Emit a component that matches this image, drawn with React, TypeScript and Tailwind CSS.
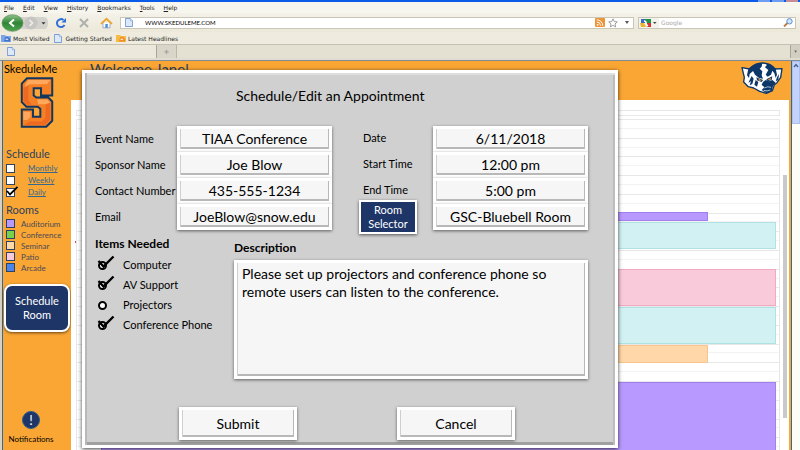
import React from "react";

const sans = "font-['Lato','Liberation_Sans',sans-serif]";
const bevel =
  "border-[3px] border-white bg-[#f6f6f6] shadow-[0_1px_3px_rgba(0,0,0,0.55),inset_1px_0_0_#cfcfcf,inset_-1px_-2px_0_#b8b8b8]";

const menus = ["File", "Edit", "View", "History", "Bookmarks", "Tools", "Help"];

const views = [
  { name: "Monthly", on: false },
  { name: "Weekly", on: false },
  { name: "Daily", on: true },
];

const rooms = [
  { name: "Auditorium", color: "bg-[#b799ff]" },
  { name: "Conference", color: "bg-[#76d14b]" },
  { name: "Seminar", color: "bg-[#ffd8a8]" },
  { name: "Patio", color: "bg-[#f9c9dc]" },
  { name: "Arcade", color: "bg-[#4a86e8]" },
];

const events = [
  { place: "top-[92px] h-[9px] right-[71px]", color: "bg-[#b799ff] border-[#a080ee]" },
  { place: "top-[102px] h-[27px] right-[3px]", color: "bg-[#d2f1f3] border-[#b0e2e4]" },
  { place: "top-[149px] h-[37px] right-[3px]", color: "bg-[#f9cad9] border-[#f2a9c2]" },
  { place: "top-[187px] h-[37px] right-[3px]", color: "bg-[#d2f1f3] border-[#b0e2e4]" },
  { place: "top-[225px] h-[18px] right-[71px]", color: "bg-[#ffd7a8] border-[#f8c68c]" },
  { place: "top-[262px] h-[90px] right-[3px]", color: "bg-[#b799ff] border-[#a080ee]" },
];

const leftFields = [
  { id: "event", label: "Event Name", value: "TIAA Conference" },
  { id: "sponsor", label: "Sponsor Name", value: "Joe Blow" },
  { id: "phone", label: "Contact Number", value: "435-555-1234" },
  { id: "email", label: "Email", value: "JoeBlow@snow.edu" },
];

const rightFields = [
  { id: "date", label: "Date", value: "6/11/2018" },
  { id: "start", label: "Start Time", value: "12:00 pm" },
  { id: "end", label: "End Time", value: "5:00 pm" },
];

const items = [
  { name: "Computer", on: true },
  { name: "AV Support", on: true },
  { name: "Projectors", on: false },
  { name: "Conference Phone", on: true },
];

function PageIcon() {
  return (
    <svg viewBox="0 0 9 10" className="h-[9px] w-2 shrink-0" aria-hidden="true">
      <path d="M.5.5h5.5l2.500 2.500v6.500h-8z" fill="#dce9fb" stroke="#6d94cf" />
      <path d="M6 .5v2.500h2.500" fill="#fff" stroke="#6d94cf" strokeWidth=".7" />
    </svg>
  );
}

function FeedIcon() {
  return (
    <svg viewBox="0 0 10 9" className="h-[9px] w-[10px] shrink-0" aria-hidden="true">
      <rect width="10" height="9" rx="1" fill="#ee9336" />
      <circle cx="2.600" cy="6.800" r=".9" fill="#fff" />
      <path d="M1.800 4a3.700 3.700 0 0 1 3.700 3.700M1.800 1.800a6 6 0 0 1 6 6" fill="none" stroke="#fff" />
    </svg>
  );
}

function FolderFeed({ blue = false }: { blue?: boolean }) {
  return (
    <svg viewBox="0 0 10 8" className="h-2 w-[10px] shrink-0" aria-hidden="true">
      <path d="M0 1h4l1 1h5v6H0z" fill={blue ? "#7da5e6" : "#f3bd45"} />
      <path d="M3 7.500l1-4 2-1 3 2v3z" fill={blue ? "#3f74cf" : "#ee8c2c"} />
      <path d="M4 6l2-2 1.500 2z" fill="#fff" opacity=".7" />
    </svg>
  );
}

function Browser() {
  return (
    <header className="shrink-0 bg-[#eeebde] font-['DejaVu_Sans',sans-serif] text-[6px] text-[#222]">
      <div className="flex h-0.5 justify-end gap-0.5 bg-[#0a5be8] pr-0.5">
        <i className="w-3 bg-[#6d9df2]" />
        <i className="w-3 bg-[#6d9df2]" />
        <i className="w-3 bg-[#c98b96]" />
      </div>
      <nav className="flex h-[11px] items-center bg-[#f6f5ee] pl-1">
        {menus.map((m) => (
          <button key={m} className="mr-[9px] leading-[10px]">
            <span className="underline">{m[0]}</span>
            {m.slice(1)}
          </button>
        ))}
      </nav>
      <div className="flex h-[19px] items-center bg-linear-to-b from-[#f4f2e9] to-[#ece9da] pr-1">
        <svg viewBox="0 0 50 18" className="h-[18px] w-[50px] shrink-0" role="img" aria-label="Back and forward">
          <defs>
            <linearGradient id="back" x1="0" y1="0" x2="0" y2="1">
              <stop offset="0" stopColor="#8fc48a" />
              <stop offset=".5" stopColor="#2f8534" />
              <stop offset="1" stopColor="#4ea550" />
            </linearGradient>
          </defs>
          <path d="M18 3h26q4 0 4 6t-4 6H18z" fill="#d3d2cc" />
          <circle cx="31" cy="9" r="6.500" fill="#c6c5c1" />
          <ellipse cx="12.500" cy="9" rx="10.500" ry="8.300" fill="url(#back)" stroke="#5d8b5c" strokeWidth=".7" />
          <path d="M14 5.500L10 9l4 3.500" fill="none" stroke="#fff" strokeWidth="2" />
          <path d="M29.500 6l3 3-3 3" fill="none" stroke="#eeeeec" strokeWidth="1.600" />
          <path d="M41.500 8.200h4l-2 2.300z" fill="#333" />
        </svg>
        <svg viewBox="0 0 60 12" className="ml-1 h-3 w-[60px] shrink-0" role="img" aria-label="Reload, stop and home">
          <path d="M10.500 8A4 4 0 1 1 9.500 3" fill="none" stroke="#2f6fd6" strokeWidth="2" />
          <path d="M12 1v4.500H7.500z" fill="#2f6fd6" />
          <path d="M26 2l8 8M34 2l-8 8" stroke="#b0b0ac" strokeWidth="2" />
          <path d="M49 6v4.800h7V6" fill="#fff" stroke="#8a99b8" strokeWidth=".8" />
          <path d="M47 6.800l5.500-5 5.500 5" fill="none" stroke="#e9a52c" strokeWidth="1.800" />
          <path d="M51.300 7h2.500v3.800h-2.500z" fill="#4a8fdc" />
        </svg>
        <label className="ml-1.5 flex h-3 flex-1 items-center gap-3 border border-[#c9c6b8] bg-white pl-1 pr-1">
          <PageIcon />
          <input
            aria-label="Address"
            defaultValue="WWW.SKEDULEME.COM"
            className="h-full min-w-0 flex-1 bg-transparent font-['Lato',sans-serif] text-[6px] text-black outline-none"
          />
          <span className="flex items-center gap-[3px]">
            <FeedIcon />
            <svg viewBox="0 0 10 10" className="h-[10px] w-[10px]" aria-hidden="true">
              <path d="M5 .8l1.300 2.800 3 .3-2.300 2 .7 3L5 7.400 2.300 8.900l.7-3-2.300-2 3-.3z" fill="#fff" stroke="#777" strokeWidth=".7" />
            </svg>
            <svg viewBox="0 0 4 3" className="ml-1 h-[3px] w-1" aria-hidden="true">
              <path d="M0 0h4L2 3z" fill="#555" />
            </svg>
          </span>
        </label>
        <label className="ml-1 flex h-3 w-[158px] items-center border border-[#c9c6b8] bg-white pr-0.5">
          <svg viewBox="0 0 20 10" className="h-[10px] w-5 shrink-0 bg-[#f3f2ec]" aria-hidden="true">
            <path d="M2 1h4v4H2z" fill="#3b69c6" />
            <path d="M6 1h6v4H6z" fill="#1f9348" />
            <path d="M7 5h5v4H8z" fill="#d5332a" />
            <path d="M1 5h4l2 4H2z" fill="#e7b530" />
            <path d="M5 3q2 0 2 2t2 3" fill="none" stroke="#fff" strokeWidth="1.600" />
            <path d="M14 4h3.500l-1.700 2z" fill="#444" />
          </svg>
          <input aria-label="Search" placeholder="Google" className="ml-0.5 min-w-0 flex-1 bg-transparent outline-none placeholder:text-[#aaa]" />
          <svg viewBox="0 0 10 9" className="h-[9px] w-[10px] shrink-0" aria-hidden="true">
            <path d="M1 8.500l3.500-3.500" stroke="#b9793f" strokeWidth="1.800" />
            <circle cx="6.500" cy="3.300" r="2.700" fill="#cfe5fb" stroke="#5f8fcb" />
          </svg>
        </label>
      </div>
      <nav className="flex h-3 items-center bg-[#efecdf] pl-px">
        <a href="#visited" className="flex items-center gap-0.5"><FolderFeed blue />Most Visited</a>
        <a href="#start" className="ml-1 flex items-center gap-1"><PageIcon />Getting Started</a>
        <a href="#news" className="ml-1 flex items-center gap-0.5"><FolderFeed />Latest Headlines</a>
      </nav>
      <div className="flex h-[14px] border-t border-[#c5c1b2] bg-[#e4e1d3]">
        <div className="flex w-[157px] items-center border-r border-[#a9a69a] bg-[#ece9dc] pl-[7px]"><PageIcon /></div>
        <button className="w-5 border-r border-[#bab7aa] bg-[#d9d6c9] text-center leading-3 text-[#888]" aria-label="New tab">✛</button>
        <button className="ml-auto w-[10px] border-l border-[#aaa79a] bg-[#d2cfc2] text-[5px] text-[#666]" aria-label="List tabs">▾</button>
      </div>
      <div className="h-[3px] border-b border-[#7f8c96] bg-[#e0ddd0]" />
    </header>
  );
}

function SLogo() {
  return (
    <svg viewBox="0 0 100 154" className="ml-[17px] block h-[51px] w-[34px]" role="img" aria-label="S">
      <path d="M20 4H96V56H62V34H40V56L48 62H84L96 74V132L78 150H4V98H38V120H60V96L52 90H18L4 76V20Z" fill="#f58025" stroke="#12365f" strokeWidth="6" />
      <path d="M23 9H90L80 22H28L15 34V22ZM9 105H30V120L21 130H9ZM50 68H80L89 76V100L76 82H54Z" fill="#ffa75a" />
      <path d="M9 34L24 24V70L34 84H20L9 74ZM90 78V128L75 144H11L28 134H66L76 122V82Z" fill="#ef6a20" />
    </svg>
  );
}

function Badger() {
  return (
    <svg viewBox="0 0 126 96" className="mt-px h-8 w-[42px]" role="img" aria-label="Badger">
      <path d="M3 17L26 21Q42 3 64 3Q88 3 102 21L123 20L119 46L108 62L100 68L94 86L76 94L56 88L38 78L22 74L8 60L10 46Z" fill="#fff" stroke="#0c3768" strokeWidth="4" strokeLinejoin="round" />
      <path d="M22 20Q40 2 64 2L62 14L56 20L64 28L62 40L66 50L54 48L42 38L36 27L26 36L24 48L18 40Z" fill="#0c3768" />
      <path d="M64 2Q88 2 104 20L108 38L104 48L100 34L94 26L90 38L80 44L74 38L82 24L72 16L78 8Z" fill="#0c3768" />
      <path d="M66 60L74 54L84 58L94 54L104 62L96 72L92 88L76 93L62 84L70 76L62 68Z" fill="#0c3768" />
      <path d="M32 42L38 50L34 66L26 70L30 58L22 62ZM44 54L52 60L48 74L40 68ZM108 46L114 36L112 54L104 58Z" fill="#0c3768" />
      <path d="M46 46L66 54L62 60L48 55ZM76 52L94 43L92 54L80 58Z" fill="#0c3768" />
      <path d="M50 49L62 55L56 57ZM79 54L90 47L89 53Z" fill="#f79a33" />
      <path d="M70 78Q80 72 90 76M68 85Q78 89 88 84" stroke="#fff" strokeWidth="2" fill="none" />
    </svg>
  );
}

function Sidebar() {
  return (
    <aside className="flex w-[68px] shrink-0 flex-col bg-[#faa634]">
      <div className="h-4 whitespace-nowrap pl-px text-[11px] leading-4 text-black">SkeduleMe</div>
      <SLogo />
      <h2 className="mt-[18px] pl-[3px] text-[11px] leading-4 text-[#2d3f5c]">Schedule</h2>
      <ul className="pl-[3px]">
        {views.map((v) => (
          <li key={v.name} className="relative flex h-3 items-center">
            <input
              type="checkbox"
              aria-label={v.name}
              defaultChecked={v.on}
              className="peer size-[9px] shrink-0 appearance-none border border-[#2c4163] bg-white"
            />
            <svg viewBox="0 0 12 10" className="pointer-events-none absolute left-0 top-0 hidden h-[10px] w-3 peer-checked:block" aria-hidden="true">
              <path d="M1 5l3 3.500L11.500 1" fill="none" stroke="#000" strokeWidth="1.800" />
            </svg>
            <a href="#view" className="ml-[13px] text-[8px] leading-3 text-[#34688f] underline">{v.name}</a>
          </li>
        ))}
      </ul>
      <h2 className="mt-1 pl-[3px] text-[11px] leading-4 text-[#2d3f5c]">Rooms</h2>
      <ul className="pl-[3px]">
        {rooms.map((r) => (
          <li key={r.name} className="flex h-[11px] items-center text-[8px] text-[#4a4a55]">
            <span className={`mr-1.5 size-[9px] border border-[#2c4163] ${r.color}`} />
            {r.name}
          </li>
        ))}
      </ul>
      <button className="mx-px mt-[11px] h-12 rounded-lg border-2 border-white bg-[#1e3567] text-[11px] leading-[14px] text-white shadow-[0_1px_3px_rgba(0,0,0,0.6)]">
        Schedule<br />Room
      </button>
      <button className="mt-auto mb-[5px] flex flex-col items-center pr-3 text-[8px] leading-3 text-black">
        <span className="mb-1 flex size-[18px] items-center justify-center rounded-full border border-[#2d5c88] bg-[#1e3567] text-[13px] text-white">!</span>
        Notifications
      </button>
    </aside>
  );
}

function Calendar() {
  return (
    <div className="relative min-h-0 flex-1 overflow-hidden bg-white pl-[5px] pr-[9px] pt-[10px]">
      <span className="absolute left-1 top-[141px] size-[2px] bg-[#e0474c]" />
      <div className="h-1.5 border border-[#e8e8e8]" />
      <div className="relative mt-[3px] flex h-[339px] flex-col border border-[#e8e8e8]">
        {Array.from({ length: 18 }, (_, i) => (
          <div key={i} className="flex flex-1 flex-col border-b border-[#e8e8e8]">
            <div className="h-1/2 border-b border-[#f3f3f3]" />
          </div>
        ))}
        {events.map((e, i) => (
          <div key={i} className={`absolute left-6 border ${e.place} ${e.color}`} />
        ))}
      </div>
    </div>
  );
}

function Field({ id, value }: { id: string; value: string }) {
  return (
    <input
      id={id}
      defaultValue={value}
      className={`h-[26px] w-full min-w-0 pb-0.5 text-center text-[14px] text-black outline-none ${bevel}`}
    />
  );
}

function AppointmentDialog() {
  return (
    <form
      onSubmit={(e) => e.preventDefault()}
      aria-label="Schedule/Edit an Appointment"
      className="absolute left-[82px] top-[70px] w-[67%] border-[3px] border-white bg-[#d0d0d0] pb-[5px] pl-[10px] pr-[27px] text-black shadow-[0_1px_4px_rgba(0,0,0,0.75),inset_2px_0_0_#b8b8b8,inset_0_2px_0_#dedede,inset_-2px_0_0_#bcbcbc,inset_0_-3px_0_#a0a0a0]"
    >
      <h1 className="ml-[141px] pt-[13px] text-[14px] leading-5">Schedule/Edit an Appointment</h1>
      <div className="mt-5 flex justify-between">
        <div className="grid grid-cols-[82px_155px] items-center">
          {leftFields.map((f) => (
            <React.Fragment key={f.id}>
              <label htmlFor={f.id} className="whitespace-nowrap text-[11px]">{f.label}</label>
              <Field id={f.id} value={f.value} />
            </React.Fragment>
          ))}
        </div>
        <div className="grid grid-cols-[74px_155px] items-center">
          {rightFields.map((f) => (
            <React.Fragment key={f.id}>
              <label htmlFor={f.id} className="pb-0.5 pl-1 text-[11px]">{f.label}</label>
              <Field id={f.id} value={f.value} />
            </React.Fragment>
          ))}
          <button type="button" className="-my-1 h-[34px] w-[58px] border-2 border-white bg-[#1e3567] text-[11px] leading-[14px] text-white shadow-[0_1px_3px_rgba(0,0,0,0.6)]">
            Room<br />Selector
          </button>
          <input aria-label="Room" defaultValue="GSC-Bluebell Room" className={`h-[26px] w-full min-w-0 pb-0.5 text-center text-[14px] text-black outline-none ${bevel}`} />
        </div>
      </div>
      <div className="mt-[6px] flex">
        <fieldset className="w-[139px] shrink-0">
          <legend className="h-[19px] text-[12px] font-bold leading-4">Items Needed</legend>
          {items.map((it) => (
            <label key={it.name} className="relative flex h-5 items-center whitespace-nowrap text-[11px]">
              <input type="checkbox" defaultChecked={it.on} className="peer ml-[3px] size-[9px] shrink-0 appearance-none rounded-full border-2 border-black bg-white" />
              <svg viewBox="0 0 18 14" className="pointer-events-none absolute left-0.5 top-0 hidden h-[14px] w-[18px] peer-checked:block" aria-hidden="true">
                <path d="M1.500 6l5 5.500L16.500 1.500" fill="none" stroke="#000" strokeWidth="2.400" />
              </svg>
              <span className="ml-4">{it.name}</span>
            </label>
          ))}
        </fieldset>
        <div className="min-w-0 flex-1 pt-1">
          <label htmlFor="description" className="block h-5 text-[12px] font-bold leading-4">Description</label>
          <textarea
            id="description"
            defaultValue="Please set up projectors and conference phone so remote users can listen to the conference."
            className={`block h-[119px] w-full resize-none px-[5px] py-0.5 text-[14px] leading-[18px] outline-none ${bevel}`}
          />
        </div>
      </div>
      <div className="mt-[28px] flex justify-between pl-[84px] pr-[73px]">
        <button type="submit" className={`h-[33px] w-[118px] text-[14px] ${bevel}`}>Submit</button>
        <button type="button" className={`h-[33px] w-[118px] text-[14px] ${bevel}`}>Cancel</button>
      </div>
    </form>
  );
}

export default function App() {
  return (
    <div className={`relative flex h-screen flex-col overflow-hidden bg-white ${sans}`}>
      <Browser />
      <div className="flex min-h-0 flex-1 border-l-2 border-[#d5d2c5]">
        <div className="flex min-w-0 flex-1 border-r border-l border-[#31699b]">
          <Sidebar />
          <main className="flex min-w-0 flex-1 flex-col border-r-2 border-[#faa634]">
            <div className="flex h-[39px] shrink-0 justify-between bg-[#faa634] pl-[19px] pr-1.5">
              <p className="text-[15px] leading-4 text-[#2d3f5c]">Welcome Jane!</p>
              <Badger />
            </div>
            <Calendar />
          </main>
        </div>
        <div className="w-2 shrink-0 bg-[#fdfdf8]">
          <div className="flex h-[63px] flex-col items-center border border-[#a9c0f2] bg-[#c3d3fb]">
            <svg viewBox="0 0 6 5" className="mt-px h-[5px] w-1.5" aria-hidden="true">
              <path d="M1 4l2-2.500L5 4" fill="none" stroke="#46608f" strokeWidth="1.300" />
            </svg>
          </div>
        </div>
      </div>
      <div className="pointer-events-none absolute right-[13px] top-[175px] h-[243px] w-1 bg-[#c8c9c9]" />
      <AppointmentDialog />
    </div>
  );
}
